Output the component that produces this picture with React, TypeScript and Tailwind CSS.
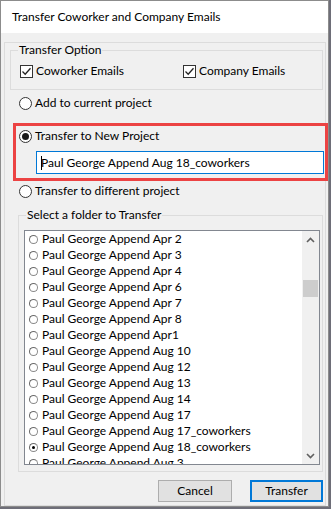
import React from "react";

const font = { fontFamily: "Lato, 'Liberation Sans', sans-serif" };

const folders = [
  "Paul George Append Apr 2",
  "Paul George Append Apr 3",
  "Paul George Append Apr 4",
  "Paul George Append Apr 6",
  "Paul George Append Apr 7",
  "Paul George Append Apr 8",
  "Paul George Append Apr1",
  "Paul George Append Aug 10",
  "Paul George Append Aug 12",
  "Paul George Append Aug 13",
  "Paul George Append Aug 14",
  "Paul George Append Aug 17",
  "Paul George Append Aug 17_coworkers",
  "Paul George Append Aug 18_coworkers",
  "Paul George Append Aug 3",
];

const Radio = ({ checked }: { checked?: boolean }) => (
  <span className="flex h-[13px] w-[13px] shrink-0 items-center justify-center rounded-full border border-[#333333] bg-white">
    {checked && <span className="h-[7px] w-[7px] rounded-full bg-[#1a1a1a]" />}
  </span>
);

const Checkbox = () => (
  <span className="flex h-[13px] w-[13px] shrink-0 items-center justify-center border border-[#333333] bg-white">
    <svg width="11" height="11" viewBox="0 0 11 11">
      <path d="M1.5 5.5 L4.2 8.2 L9.5 2.2" fill="none" stroke="#222" strokeWidth="1.3" />
    </svg>
  </span>
);

const SmallRadio = ({ checked }: { checked?: boolean }) => (
  <span className="flex h-[9px] w-[9px] shrink-0 items-center justify-center rounded-full border border-[#8a8a8a] border-t-[#6a6a6a] border-l-[#6a6a6a] bg-white">
    {checked && <span className="h-[3px] w-[3px] rounded-full bg-black" />}
  </span>
);

const Chevron = ({ up }: { up?: boolean }) => (
  <svg width="9" height="6" viewBox="0 0 9 6">
    <path
      d={up ? "M1 5 L4.5 1.5 L8 5" : "M1 1 L4.5 4.5 L8 1"}
      fill="none"
      stroke="#606060"
      strokeWidth="1.6"
    />
  </svg>
);

export default function App() {
  return (
    <div className="h-[509px] w-[331px] bg-[#6e6e78]" style={font}>
      <div className="h-[507px] w-[329px] border border-[#8c8c8c] bg-[#f0f0f0] text-[12px] text-black">
        <div className="flex h-[32px] items-center bg-white pl-[11px] text-[12px]">
          Transfer Coworker and Company Emails
        </div>

        <div className="ml-[3px] mt-[9px] h-[464px] w-[322px] border border-[#dcdcdc]">
          <fieldset className="ml-[5px] w-[313px] border border-[#dcdcdc] px-0 pb-[9px] pt-[5px]">
            <legend className="ml-[7px] px-[1px] text-[12px] leading-[14px]">Transfer Option</legend>
            <div className="flex h-[18px] items-center pl-[9px]">
              <div className="flex w-[163px] items-center gap-[3px]">
                <Checkbox />
                <span>Coworker Emails</span>
              </div>
              <div className="flex items-center gap-[3px]">
                <Checkbox />
                <span>Company Emails</span>
              </div>
            </div>
          </fieldset>

          <div className="mt-[5px] flex h-[16px] items-center gap-[3px] pl-[14px]">
            <Radio />
            <span>Add to current project</span>
          </div>

          <div className="ml-[8px] mt-[12px] w-[315px] border-[3px] border-[#ec4343] pb-[4px] pt-[2px]">
            <div className="flex h-[16px] items-center gap-[3px] pl-[3px]">
              <Radio checked />
              <span>Transfer to New Project</span>
            </div>
            <div className="ml-[20px] mt-[7px] flex h-[23px] w-[288px] items-center border border-[#0078d7] bg-white pl-[4px]">
              <span className="h-[14px] w-[1px] bg-black" />
              <span className="-ml-[1px]">Paul George Append Aug 18_coworkers</span>
            </div>
          </div>

          <div className="mt-[2px] flex h-[16px] items-center gap-[3px] pl-[14px]">
            <Radio />
            <span>Transfer to different project</span>
          </div>

          <fieldset className="ml-[13px] mt-[9px] w-[305px] border border-[#dcdcdc] px-0 pb-[6px] pt-[8px]">
            <legend className="ml-[7px] px-[1px] text-[12px] leading-[14px]">Select a folder to Transfer</legend>
            <div className="ml-[5px] flex h-[235px] w-[296px] border border-[#828790] bg-white">
              <div className="flex-1 overflow-hidden pl-[4px]">
                {folders.map((f) => (
                  <div key={f} className="flex h-[16px] items-center gap-[4px] whitespace-nowrap">
                    <SmallRadio checked={f === "Paul George Append Aug 18_coworkers"} />
                    <span>{f}</span>
                  </div>
                ))}
              </div>
              <div className="flex w-[17px] flex-col bg-[#f0f0f0]">
                <div className="flex h-[17px] items-center justify-center">
                  <Chevron up />
                </div>
                <div className="flex-1 pt-[32px]">
                  <div className="mx-[1px] h-[17px] bg-[#cdcdcd]" />
                </div>
                <div className="flex h-[17px] items-center justify-center">
                  <Chevron />
                </div>
              </div>
            </div>
          </fieldset>

          <div className="mt-[8px] flex justify-end gap-[18px] pr-[2px]">
            <button className="h-[22px] w-[74px] border border-[#adadad] bg-[#e1e1e1] text-[12px]">
              Cancel
            </button>
            <button className="h-[22px] w-[73px] border-2 border-[#0078d7] bg-[#e1e1e1] text-[12px]">
              Transfer
            </button>
          </div>
        </div>
      </div>
    </div>
  );
}
